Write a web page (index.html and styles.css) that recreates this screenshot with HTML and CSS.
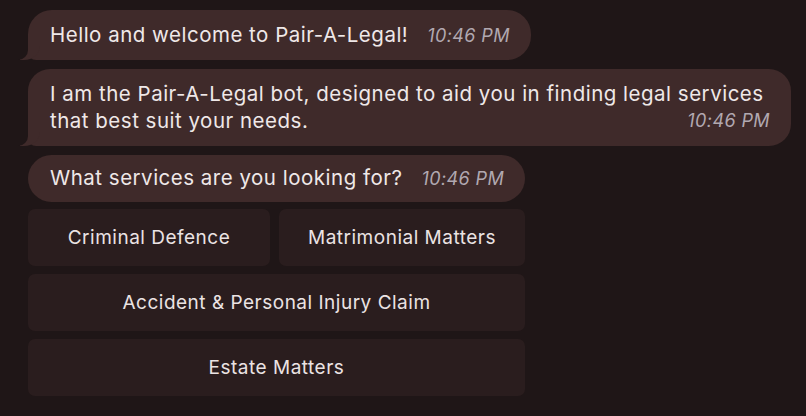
FILE: index.html
```html
<!DOCTYPE html>
<html>
<head>
<meta charset="utf-8">
<link rel="stylesheet" href="styles.css">
</head>
<body>
<div class="chat">
  <div class="bubble tail">
    <span class="text">Hello and welcome to Pair-A-Legal!</span><span class="time">10:46 PM</span>
  </div>
  <div class="bubble tail wide">
    <span class="text">I am the Pair-A-Legal bot, designed to aid you in finding legal services that best suit your needs.</span><span class="time float">10:46 PM</span>
  </div>
  <div class="bubble plain">
    <span class="text">What services are you looking for?</span><span class="time">10:46 PM</span>
  </div>
  <div class="options">
    <div class="opt">Criminal Defence</div>
    <div class="opt">Matrimonial Matters</div>
    <div class="opt full">Accident &amp; Personal Injury Claim</div>
    <div class="opt full">Estate Matters</div>
  </div>
</div>
</body>
</html>
```
FILE: styles.css
```css
html, body {
  margin: 0;
  padding: 0;
  background: #1f1617;
  width: 806px;
  height: 416px;
  overflow: hidden;
}
body {
  font-family: Inter, "Noto Sans", sans-serif;
  color: #efe8e8;
}
.chat {
  padding: 10px 0 0 28px;
  display: flex;
  flex-direction: column;
  align-items: flex-start;
  gap: 9px;
}
.bubble {
  position: relative;
  background: #3f2a2a;
  border-radius: 24px;
  padding: 12px 21px 12px 22px;
  font-size: 20.5px;
  line-height: 26px;
  letter-spacing: 0.5px;
}
.bubble.plain {
  padding-top: 10px;
  padding-bottom: 11px;
}
.bubble.tail {
  border-bottom-left-radius: 8px;
}
.bubble.tail::before {
  content: "";
  position: absolute;
  left: -8px;
  bottom: 0;
  width: 20px;
  height: 20px;
  background: #3f2a2a;
  border-bottom-right-radius: 16px 14px;
}
.bubble.tail::after {
  content: "";
  position: absolute;
  left: -26px;
  bottom: 0;
  width: 26px;
  height: 21px;
  background: #1f1617;
  border-bottom-right-radius: 10px;
}
.bubble.wide {
  width: 720px;
  padding-top: 11px;
  padding-bottom: 12px;
  line-height: 27px;
  border-radius: 22px;
  border-bottom-left-radius: 8px;
}
.time {
  font-style: italic;
  font-size: 18px;
  line-height: 20px;
  letter-spacing: 0.4px;
  color: #b1a8b0;
  margin-left: 19px;
}
.time.float {
  float: right;
  margin-top: 4px;
}
.options {
  margin-top: -2px;
  width: 497px;
  display: grid;
  grid-template-columns: 242px 246px;
  gap: 8px 9px;
}
.opt {
  background: #2a1d1e;
  border-radius: 7px;
  height: 57px;
  display: flex;
  align-items: center;
  justify-content: center;
  font-size: 19px;
  letter-spacing: 0.5px;
  color: #ebe3e3;
}
.opt.full {
  grid-column: 1 / 3;
}
```
